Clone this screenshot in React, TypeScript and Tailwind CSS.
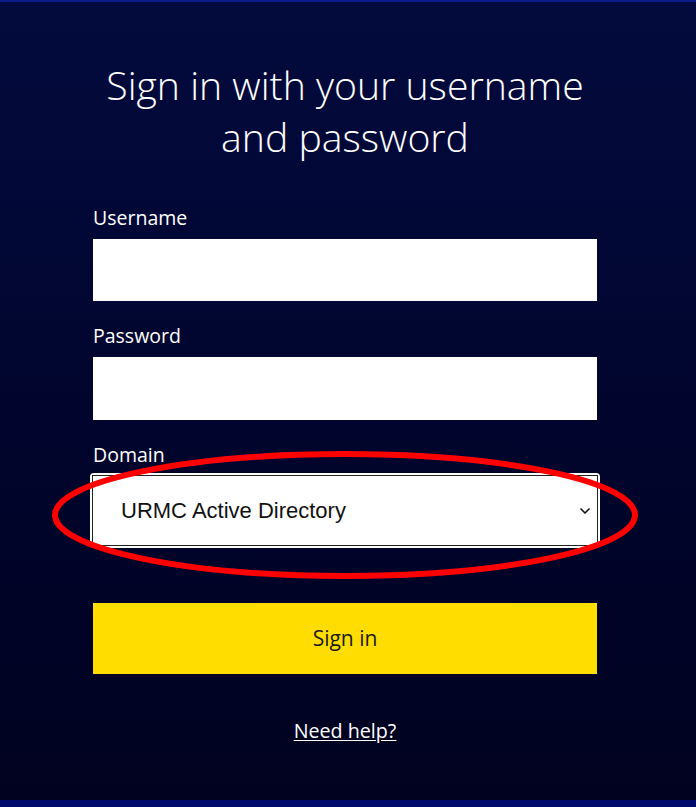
import { ChevronDown } from "lucide-react";

const FONT = { fontFamily: '"Open Sans", "Noto Sans", sans-serif' };

export default function App() {
  return (
    <div className="relative h-[807px] w-[696px] overflow-hidden bg-gradient-to-b from-[#030b3e] to-[#00021f]" style={FONT}>
      <div className="h-[2px] bg-[#0b1a8c]" />
      <div className="flex flex-col pt-[57px]">
        <h1 className="pr-[6px] text-center text-[39.2px] font-light leading-[52px] text-white">
          Sign in with your username
          <br />
          and password
        </h1>

        <div className="ml-[93px] mt-[42px] flex w-[504px] flex-col">
          <label className="text-[19.5px] leading-[26px] text-white">Username</label>
          <input className="mt-2 h-[62px] bg-white px-4 text-lg outline-none" />

          <label className="mt-[22px] text-[19.5px] leading-[26px] text-white">Password</label>
          <input type="password" className="mt-2 h-[63px] bg-white px-4 text-lg outline-none" />

          <label className="mt-[22px] text-[19.5px] leading-[26px] text-white">Domain</label>
          <div className="-mx-[3px] mt-[5px] rounded-[4px] border-2 border-white">
            <div className="relative flex h-[71px] items-center border border-[#222] bg-white">
              <span className="pl-[28px] text-[22px] text-[#111]" style={{ fontFamily: '"Liberation Sans", Arial, sans-serif' }}>
                URMC Active Directory
              </span>
              <ChevronDown className="absolute right-[4px] h-4 w-4 text-[#111]" strokeWidth={2.5} />
            </div>
          </div>

          <button className="mt-[55px] h-[71px] bg-[#ffdd00] text-[21px] text-[#1a1a1a]">Sign in</button>

          <a href="#" className="mt-[44px] self-center text-[19.7px] leading-[26px] text-white underline underline-offset-2">
            Need help?
          </a>
        </div>
      </div>

      <div className="absolute bottom-0 left-0 right-0 h-[7px] bg-[#000a6c]" />

      <svg className="pointer-events-none absolute left-0 top-0" width="696" height="807">
        <ellipse cx="345" cy="515" rx="290" ry="61" fill="none" stroke="#ff0000" strokeWidth="6" />
      </svg>
    </div>
  );
}
